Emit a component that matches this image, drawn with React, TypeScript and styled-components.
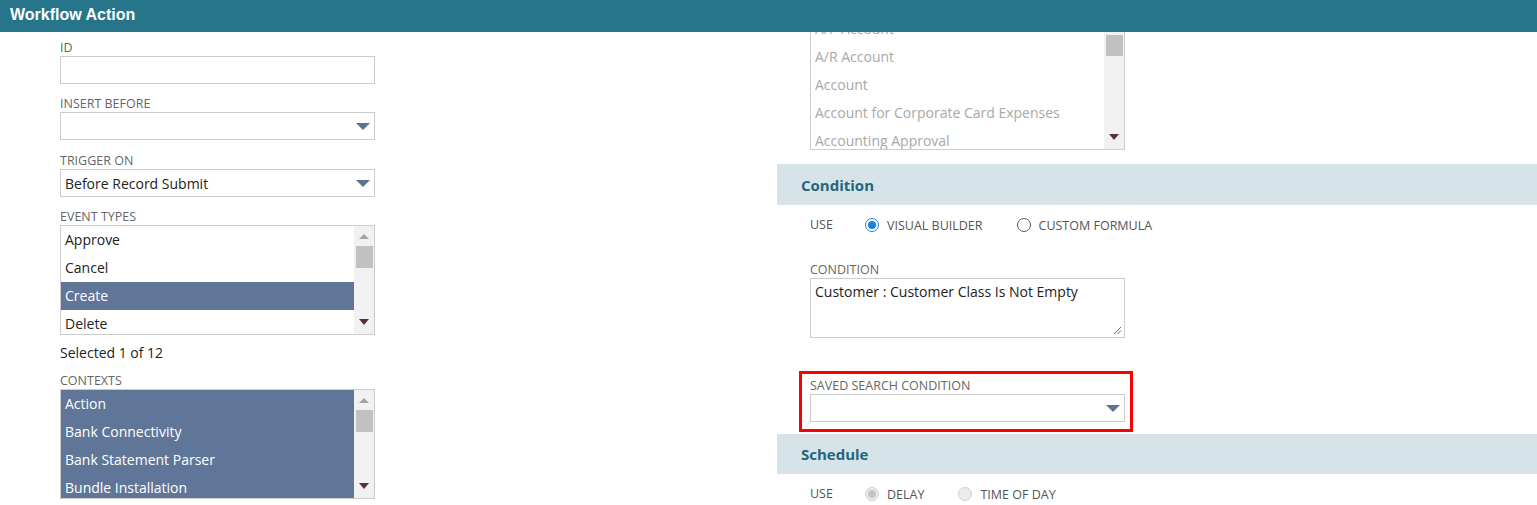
import styled, { createGlobalStyle } from 'styled-components'

const GlobalStyle = createGlobalStyle`
  html, body {
    margin: 0;
    padding: 0;
    background: #ffffff;
  }
  body {
    font-family: 'Open Sans', 'Liberation Sans', sans-serif;
    color: #222;
  }
`

const Page = styled.div`
  position: relative;
  height: 505px;
  overflow: hidden;
`

const TitleBar = styled.div`
  position: absolute;
  top: 0;
  left: 0;
  right: 0;
  height: 32px;
  z-index: 5;
  box-sizing: border-box;
  padding: 6px 0 0 10px;
  background: #27758a;
  color: #fff;
  font-family: 'Liberation Sans', Arial, sans-serif;
  font-weight: bold;
  font-size: 16px;
  line-height: 18px;
`

const Columns = styled.div`
  display: grid;
  grid-template-columns: 777px 1fr;
`

const LeftCol = styled.div`
  display: flex;
  flex-direction: column;
  gap: 12px;
  padding: 40px 0 0 60px;
`

const RightCol = styled.div`
  display: flex;
  flex-direction: column;
`

const Field = styled.div<{ $nudge?: number }>`
  display: flex;
  flex-direction: column;
  width: 315px;
  margin-top: ${p => p.$nudge ?? 0}px;
`

const Label = styled.span`
  display: block;
  font-size: 12.5px;
  line-height: 16px;
  color: #666;
  text-transform: uppercase;
  white-space: nowrap;
`

const TextInput = styled.div`
  box-sizing: border-box;
  width: 315px;
  height: 28px;
  border: 1px solid #cccccc;
  background: #fff;
`

const Select = styled.div`
  box-sizing: border-box;
  width: 315px;
  height: 28px;
  border: 1px solid #cccccc;
  background: #fff;
  display: flex;
  align-items: center;
  justify-content: space-between;
  padding: 0 4px 0 4px;
  font-size: 14px;
  color: #222;
`

const Caret = styled.span`
  width: 0;
  height: 0;
  margin-left: auto;
  border-left: 7px solid transparent;
  border-right: 7px solid transparent;
  border-top: 7px solid #5a7494;
`

const ListBox = styled.div<{ $height?: number }>`
  box-sizing: border-box;
  width: 315px;
  height: ${p => p.$height ?? 110}px;
  border: 1px solid #cccccc;
  background: #fff;
  display: flex;
  overflow: hidden;
`

const ListItems = styled.div<{ $offset?: number }>`
  flex: 1;
  overflow: hidden;
  padding-top: ${p => p.$offset ?? 0}px;
`

const ListRow = styled.div<{ $selected?: boolean; $disabled?: boolean }>`
  height: 28px;
  line-height: 28px;
  padding-left: 4px;
  font-size: 14px;
  white-space: nowrap;
  background: ${p => (p.$selected ? '#607698' : 'transparent')};
  color: ${p => (p.$selected ? '#ffffff' : p.$disabled ? '#a8a8a8' : '#222')};
`

const Track = styled.div`
  width: 20px;
  background: #f1f1f1;
  display: flex;
  flex-direction: column;
  align-items: center;
  padding: 8px 0 9px;
  box-sizing: border-box;
`

const UpArrow = styled.span`
  width: 0;
  height: 0;
  border-left: 5px solid transparent;
  border-right: 5px solid transparent;
  border-bottom: 5px solid #a3a3a3;
`

const Thumb = styled.span<{ $shift?: number; $size?: number }>`
  width: 17px;
  height: ${p => p.$size ?? 22}px;
  margin-top: ${p => 7 + (p.$shift ?? 0)}px;
  background: #c1c1c1;
`

const DownArrow = styled.span`
  width: 0;
  height: 0;
  margin-top: auto;
  border-left: 5px solid transparent;
  border-right: 5px solid transparent;
  border-top: 6px solid #5a2e3e;
`

const Hint = styled.div`
  font-size: 14px;
  line-height: 20px;
  margin: -4px 0 -2px;
  color: #222;
`

const ListWrap = styled.div`
  padding-left: 33px;
`

const SectionHeader = styled.div<{ $gap: number; $h: number }>`
  margin-top: ${p => p.$gap}px;
  height: ${p => p.$h}px;
  box-sizing: border-box;
  padding-left: 24px;
  display: flex;
  align-items: center;
  background: #d6e4e9;
  color: #24667c;
  font-size: 15px;
  font-weight: 700;
`

const SectionBody = styled.div`
  padding-left: 33px;
  display: flex;
  flex-direction: column;
`

const RadioRow = styled.div`
  margin-top: 6px;
  height: 28px;
  display: flex;
  align-items: center;
`

const UseLabel = styled(Label)`
  width: 55px;
  color: #555;
`

const RadioOption = styled.label`
  display: flex;
  align-items: center;
  gap: 8px;
  margin-right: 34px;
  font-size: 12.5px;
  color: #555;
  text-transform: uppercase;
  white-space: nowrap;
`

const RadioCircle = styled.span<{ $checked?: boolean; $disabled?: boolean }>`
  box-sizing: border-box;
  width: 14px;
  height: 14px;
  border-radius: 50%;
  display: flex;
  align-items: center;
  justify-content: center;
  border: 1px solid ${p => (p.$disabled ? '#d0d0d0' : p.$checked ? '#1f7fd6' : '#5a5a5a')};
  background: ${p => (p.$disabled ? '#ececec' : '#fff')};
  &::after {
    content: '';
    width: 8px;
    height: 8px;
    border-radius: 50%;
    background: ${p => (p.$disabled ? '#c4c4c4' : '#1f7fd6')};
    display: ${p => (p.$checked ? 'block' : 'none')};
  }
`

const ConditionField = styled(Field)`
  margin-top: 23px;
`

const TextArea = styled.div`
  position: relative;
  box-sizing: border-box;
  width: 315px;
  height: 60px;
  border: 1px solid #cccccc;
  padding: 3px 4px;
  font-size: 14px;
  line-height: 20px;
  color: #222;
`

const Grip = styled.svg`
  position: absolute;
  right: 2px;
  bottom: 2px;
`

const Highlight = styled.div`
  margin: 33px 0 0 -11px;
  width: 334px;
  box-sizing: border-box;
  border: 3px solid #ff0000;
  padding: 4px 5px 7px 8px;
  display: flex;
  flex-direction: column;
`

const eventTypes = ['Approve', 'Cancel', 'Create', 'Delete']
const contexts = ['Action', 'Bank Connectivity', 'Bank Statement Parser', 'Bundle Installation']
const recordTypes = [
  'A/P Account',
  'A/R Account',
  'Account',
  'Account for Corporate Card Expenses',
  'Accounting Approval',
]

function Scrollbar({ shift = 0, thumb = 22 }: { shift?: number; thumb?: number }) {
  return (
    <Track>
      <UpArrow />
      <Thumb $shift={shift} $size={thumb} />
      <DownArrow />
    </Track>
  )
}

export default function App() {
  return (
    <Page>
      <GlobalStyle />
      <TitleBar>Workflow Action</TitleBar>
      <Columns>
        <LeftCol>
          <Field>
            <Label>ID</Label>
            <TextInput />
          </Field>
          <Field>
            <Label>Insert Before</Label>
            <Select>
              <Caret />
            </Select>
          </Field>
          <Field $nudge={1}>
            <Label>Trigger On</Label>
            <Select>
              <span>Before Record Submit</span>
              <Caret />
            </Select>
          </Field>
          <Field>
            <Label>Event Types</Label>
            <ListBox>
              <ListItems>
                {eventTypes.map(t => (
                  <ListRow key={t} $selected={t === 'Create'}>
                    {t}
                  </ListRow>
                ))}
              </ListItems>
              <Scrollbar />
            </ListBox>
          </Field>
          <Hint>Selected 1 of 12</Hint>
          <Field>
            <Label>Contexts</Label>
            <ListBox>
              <ListItems>
                {contexts.map(c => (
                  <ListRow key={c} $selected>
                    {c}
                  </ListRow>
                ))}
              </ListItems>
              <Scrollbar />
            </ListBox>
          </Field>
        </LeftCol>

        <RightCol>
          <ListWrap>
            <ListBox $height={150}>
              <ListItems $offset={14}>
                {recordTypes.map(r => (
                  <ListRow key={r} $disabled>
                    {r}
                  </ListRow>
                ))}
              </ListItems>
              <Scrollbar shift={14} thumb={21} />
            </ListBox>
          </ListWrap>

          <SectionHeader $gap={14} $h={41}>Condition</SectionHeader>
          <SectionBody>
            <RadioRow>
              <UseLabel>Use</UseLabel>
              <RadioOption>
                <RadioCircle $checked />
                Visual Builder
              </RadioOption>
              <RadioOption>
                <RadioCircle />
                Custom Formula
              </RadioOption>
            </RadioRow>
            <ConditionField>
              <Label>Condition</Label>
              <TextArea>
                Customer : Customer Class Is Not Empty
                <Grip width="9" height="9" viewBox="0 0 9 9">
                  <path d="M8 1 L1 8 M8 4.5 L4.5 8" stroke="#666" strokeWidth="1" fill="none" />
                </Grip>
              </TextArea>
            </ConditionField>
            <Highlight>
              <Label>Saved Search Condition</Label>
              <Select>
                <Caret />
              </Select>
            </Highlight>
          </SectionBody>

          <SectionHeader $gap={2} $h={40}>Schedule</SectionHeader>
          <SectionBody>
            <RadioRow>
              <UseLabel>Use</UseLabel>
              <RadioOption>
                <RadioCircle $checked $disabled />
                Delay
              </RadioOption>
              <RadioOption>
                <RadioCircle $disabled />
                Time of Day
              </RadioOption>
            </RadioRow>
          </SectionBody>
        </RightCol>
      </Columns>
    </Page>
  )
}
